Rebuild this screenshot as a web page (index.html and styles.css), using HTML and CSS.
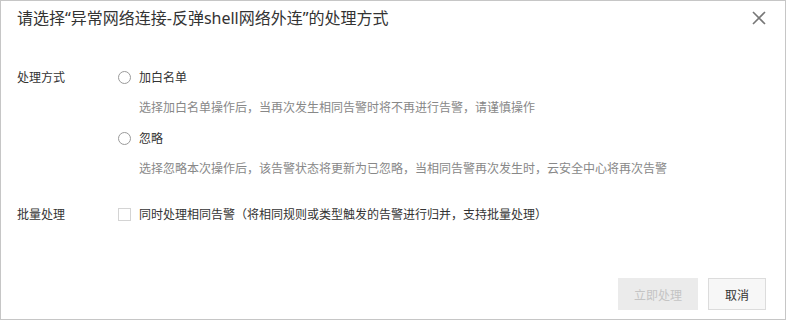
FILE: index.html
```html
<!DOCTYPE html>
<html lang="zh-CN">
<head>
<meta charset="utf-8">
<title>处理方式</title>
<link rel="stylesheet" href="styles.css">
</head>
<body>
<div class="dialog">
  <div class="header">
    <div class="title">请选择“异常网络连接-反弹shell网络外连”的处理方式</div>
    <button class="close" aria-label="关闭">
      <svg width="14" height="14" viewBox="0 0 14 14"><path d="M1 1 L13 13 M13 1 L1 13" stroke="#777" stroke-width="1.6" fill="none"/></svg>
    </button>
  </div>
  <div class="body">
    <div class="row">
      <div class="label">处理方式</div>
      <div class="options">
        <div class="option">
          <label class="choice"><span class="radio"></span><span>加白名单</span></label>
          <div class="desc">选择加白名单操作后，当再次发生相同告警时将不再进行告警，请谨慎操作</div>
        </div>
        <div class="option">
          <label class="choice"><span class="radio"></span><span>忽略</span></label>
          <div class="desc">选择忽略本次操作后，该告警状态将更新为已忽略，当相同告警再次发生时，云安全中心将再次告警</div>
        </div>
      </div>
    </div>
    <div class="row batch">
      <div class="label">批量处理</div>
      <label class="choice"><span class="checkbox"></span><span>同时处理相同告警（将相同规则或类型触发的告警进行归并，支持批量处理）</span></label>
    </div>
  </div>
  <div class="footer">
    <button class="btn btn-primary" disabled>立即处理</button>
    <button class="btn btn-cancel">取消</button>
  </div>
</div>
</body>
</html>
```

FILE: styles.css
```css
html, body {
  margin: 0;
  padding: 0;
  background: #fff;
}
body {
  font-family: "Noto Sans CJK SC", "Noto Sans", "Liberation Sans", sans-serif;
  color: #333;
}
.dialog {
  box-sizing: border-box;
  width: 786px;
  height: 320px;
  border: 1px solid #c6c6c6;
  display: flex;
  flex-direction: column;
  background: #fff;
}
.header {
  display: flex;
  justify-content: space-between;
  align-items: flex-start;
  padding: 7px 19px 0 16px;
}
.title {
  font-family: "Noto Sans", "Noto Sans CJK SC", sans-serif;
  font-size: 16px;
  line-height: 20px;
  color: #333;
}
.close {
  border: 0;
  background: transparent;
  padding: 0;
  margin-top: 3px;
  width: 14px;
  height: 14px;
  cursor: pointer;
  display: flex;
}
.body {
  flex: 1;
  padding: 39px 16px 0 16px;
  font-size: 12px;
  line-height: 20px;
}
.row {
  display: flex;
}
.label {
  width: 101px;
  flex: none;
  color: #333;
}
.options {
  display: flex;
  flex-direction: column;
  gap: 11px;
}
.choice {
  display: flex;
  align-items: center;
  color: #333;
}
.desc {
  margin-top: 10px;
  padding-left: 21px;
  color: #888;
}
.radio {
  box-sizing: border-box;
  width: 13px;
  height: 13px;
  border: 1px solid #9a9a9a;
  border-radius: 50%;
  margin-right: 8px;
  flex: none;
}
.checkbox {
  box-sizing: border-box;
  width: 13px;
  height: 13px;
  border: 1px solid #d4d4d4;
  margin-right: 8px;
  flex: none;
}
.batch {
  margin-top: 26px;
}
.footer {
  display: flex;
  justify-content: flex-end;
  gap: 10px;
  padding: 0 19px 9px 0;
}
.btn {
  box-sizing: border-box;
  height: 32px;
  font-family: inherit;
  font-size: 12px;
  padding: 0;
  border-radius: 0;
}
.btn-primary {
  width: 80px;
  background: #ebebeb;
  border: 1px solid #ebebeb;
  color: #c4c4c4;
}
.btn-cancel {
  width: 58px;
  background: #f7f7f7;
  border: 1px solid #dcdcdc;
  color: #333;
}
```
